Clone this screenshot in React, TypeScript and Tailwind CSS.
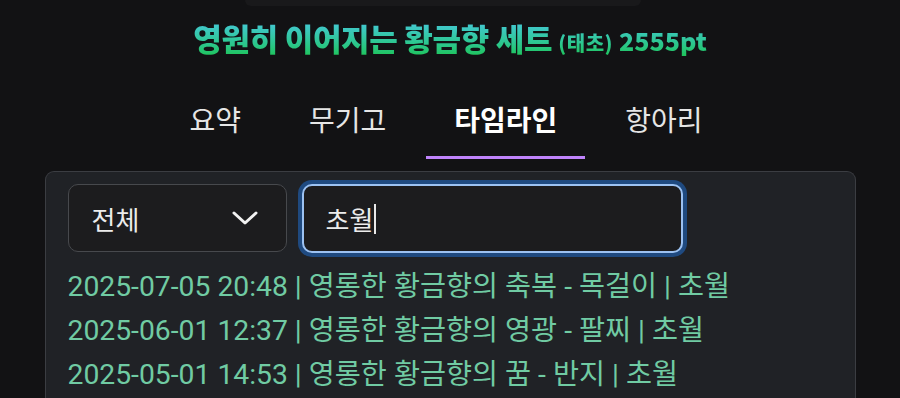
import React from "react";

const rows = [
  "2025-07-05 20:48 | 영롱한 황금향의 축복 - 목걸이 | 초월",
  "2025-06-01 12:37 | 영롱한 황금향의 영광 - 팔찌 | 초월",
  "2025-05-01 14:53 | 영롱한 황금향의 꿈 - 반지 | 초월",
];

const tabs = ["요약", "무기고", "타임라인", "항아리"];

export default function App() {
  return (
    <div
      className="w-[900px] h-[398px] overflow-hidden bg-[#121214] flex flex-col items-center"
      style={{ fontFamily: '"Roboto", "Noto Sans CJK KR", sans-serif' }}
    >
      <div className="w-[396px] h-[6px] shrink-0 rounded-b-[14px] bg-[#19191b] ml-[-15px]" />
      <div
        className="mt-[16px] h-[34px] flex items-baseline font-black bg-gradient-to-b from-[#45c8d6] to-[#1fc45a] bg-clip-text text-transparent leading-none"
        style={{ fontFamily: '"Noto Sans CJK KR", sans-serif' }}
      >
        <span className="text-[31px] tracking-[-0.3px]">영원히 이어지는 황금향 세트</span>
        <span className="ml-[6px] text-[20px] tracking-[0.5px]">(태초)</span>
        <span className="ml-[6px] text-[25px]">2555pt</span>
      </div>
      <div className="mt-[43px] flex gap-[12px] ml-[-8px]">
        {tabs.map((t) => (
          <div key={t} className="flex flex-col items-center">
            <div
              className={
                "px-[28px] h-[40px] flex items-center text-[28px] leading-none " +
                (t === "타임라인" ? "font-bold text-white" : "text-[#e6e6e6]")
              }
              style={{ fontFamily: '"Noto Sans CJK KR", sans-serif' }}
            >
              {t}
            </div>
            <div
              className={
                "mt-[17px] h-[3px] w-full " + (t === "타임라인" ? "bg-[#c084fc]" : "bg-transparent")
              }
            />
          </div>
        ))}
      </div>
      <div className="mt-[12px] w-[811px] flex-1 rounded-t-[9px] border border-b-0 border-[#3b3d42] bg-[#202226] px-[22px] pt-[12px]">
        <div className="flex gap-[15px]">
          <div className="w-[219px] h-[68px] rounded-[10px] border border-[#47494d] bg-[#1c1c1e] flex items-center justify-between pl-[23px] pr-[28px]">
            <span
              className="text-[26px] text-[#ececec]"
              style={{ fontFamily: '"Noto Sans CJK KR", sans-serif' }}
            >
              전체
            </span>
            <svg width="26" height="16" viewBox="0 0 26 16" fill="none">
              <path d="M2 3 L13 13 L24 3" stroke="#f2f2f2" strokeWidth="3" strokeLinecap="round" strokeLinejoin="round" />
            </svg>
          </div>
          <div className="w-[381px] h-[69px] rounded-[10px] border-2 border-[#9cc2f2] bg-[#1c1c1e] ring-4 ring-[#1f4a80] flex items-center pl-[22px]">
            <span
              className="text-[26px] text-[#ececec]"
              style={{ fontFamily: '"Noto Sans CJK KR", sans-serif' }}
            >
              초월
            </span>
            <span className="ml-[1px] w-[2px] h-[30px] bg-[#e8e8e8]" />
          </div>
        </div>
        <div className="mt-[12px] flex flex-col">
          {rows.map((r) => (
            <div key={r} className="h-[44px] flex items-center text-[28.3px] text-[#70cba3] whitespace-nowrap">
              {r}
            </div>
          ))}
        </div>
      </div>
    </div>
  );
}
